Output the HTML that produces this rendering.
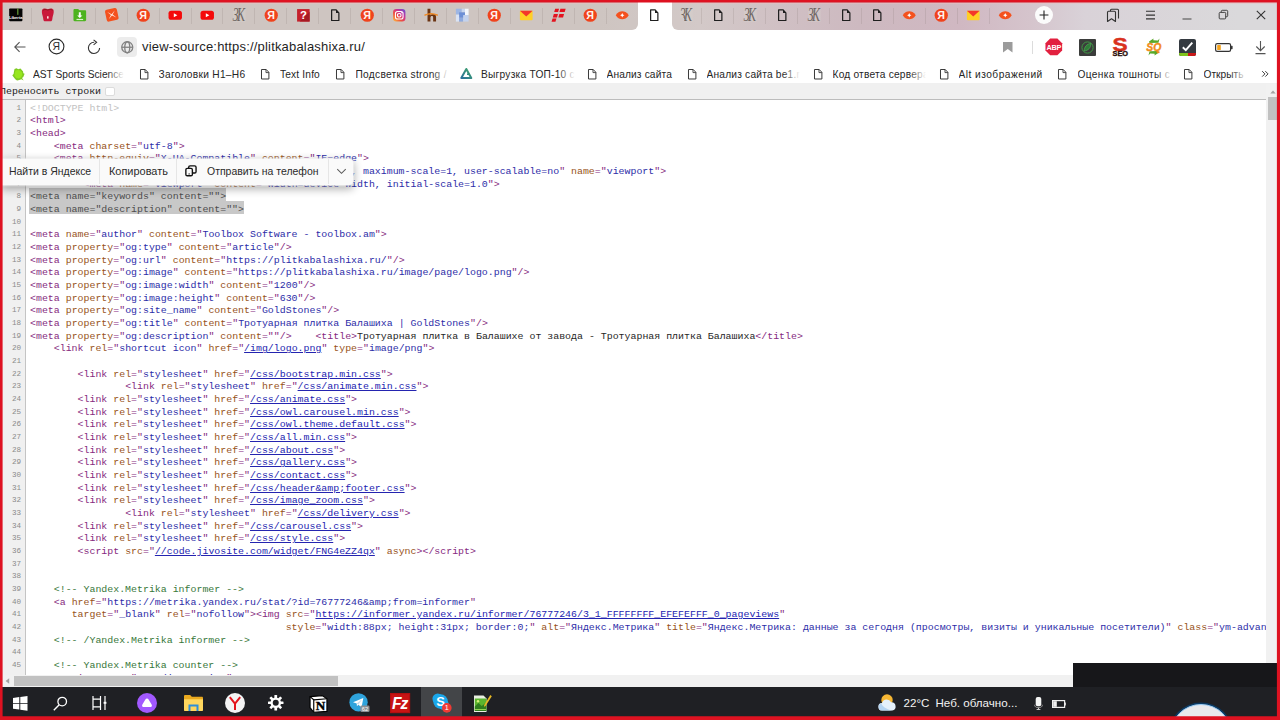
<!DOCTYPE html>
<html lang="ru"><head><meta charset="utf-8"><title>view-source</title>
<style>
*{box-sizing:border-box;margin:0;padding:0}
html,body{width:1280px;height:720px;overflow:hidden;background:#fff}
body{position:relative;font-family:"Liberation Sans",sans-serif}
.abs{position:absolute}
#tabbar{left:0;top:0;width:1280px;height:30px;background:linear-gradient(90deg,#cec5c1 0,#cec5c1 600px,#d3c9c8 700px,#d0c0c4 780px,#cdb9c0 860px,#d0b8c2 960px,#d5c4cc 1030px,#d9d2d8 1085px,#dad9db 1240px)}
#tabtop{left:0;top:2.7px;width:1280px;height:1.3px;background:rgba(238,190,192,.5)}
#acttab{left:638px;top:0;width:34px;height:31px;background:#fff}
#toolbar{left:0;top:30px;width:1280px;height:54px;background:#fff}
#wrapbar{left:0;top:83px;width:1280px;height:17px;background:#f0f0f0;border-bottom:1px solid #bcbcbc}
#wraptxt{left:0px;top:85.7px;font:9.92px/12px "Liberation Mono",monospace;color:#222;white-space:pre}
#wrapchk{left:105px;top:86.6px;width:9.5px;height:9.5px;background:#fff;border:1px solid #dcdcdc;border-radius:2px}
#code{left:0;top:99.5px;width:1266px;height:576px;overflow:hidden;background:#fff}
#gutter{left:0;top:0;width:25.5px;height:576px;background:#f0f0f0;border-right:1px solid #c4c4c4}
.num,.ln{position:absolute;font:9.92px/15.4px "Liberation Mono",monospace;white-space:pre;height:12.667px}
.num{left:0;width:21px;text-align:right;color:#8a8a8a;font-size:7.6px;margin-top:-99.5px}
.ln{left:30px;color:#262626;margin-top:-99.5px}
.t{color:#862a80}.an{color:#98531a}.av{color:#2d2da8}.c{color:#38783a}.d{color:#c2c2c2}
.lk{color:#2424b0;text-decoration:underline}
.seltx{color:#4e4e4e}
.selbg{position:absolute;left:29.3px;background:#c8c8c8;height:12.8px}
#vscroll{left:1266px;top:84px;width:11.5px;height:591px;background:#f1f1f1}
#vthumb{left:1267.5px;top:97px;width:9px;height:23px;background:#c1c1c1}
#hscroll{left:0;top:675px;width:1073px;height:12px;background:#f1f1f1}
#hthumb{left:14px;top:676px;width:323.5px;height:10px;background:#c1c1c1}
#blackbox{left:1073px;top:663px;width:207px;height:25px;background:#17171a}
#taskbar{left:0;top:687px;width:1280px;height:33px;background:#1f2024}
#frame{left:0;top:0;pointer-events:none}

svg{position:absolute;overflow:visible}
.bm{position:absolute;top:68.1px;font:10.2px/14px "Liberation Sans",sans-serif;letter-spacing:.3px;color:#262626;white-space:nowrap;overflow:hidden;height:14px}
.bm i{position:absolute;right:0;top:0;width:17px;height:14px;background:linear-gradient(90deg,rgba(255,255,255,0),#fff)}
#url{left:142px;top:39.4px;font:13px/16px "Liberation Sans",sans-serif;color:#1f1f1f;white-space:nowrap;letter-spacing:.18px}
.tsep{position:absolute;top:7.5px;width:1px;height:16px;background:rgba(120,105,100,.16)}
.pop{position:absolute;top:164.2px;font:11.4px/14px "Liberation Sans",sans-serif;color:#2a2a2a;white-space:nowrap;transform-origin:0 0;transform:scaleX(.918)}
.tk{position:absolute;top:695.6px;font:11.6px/14px "Liberation Sans",sans-serif;color:#f2f2f2;white-space:nowrap}

</style></head><body>
<div id="tabbar" class="abs"></div><div id="tabtop" class="abs"></div>
<div id="acttab" class="abs"></div>
<div id="toolbar" class="abs"></div>
<svg style="left:8.4px;top:7.4px" width="15.6" height="15.6" viewBox="0 0 16 16"><rect x="1.2" y="1.5" width="13.6" height="13" rx="0.8" fill="#050505"/><rect x="9.6" y="1.5" width="1" height="6.5" fill="#7bc242"/><text x="8" y="12.3" font-family="Liberation Sans,sans-serif" font-weight="bold" font-size="4.2" fill="#fff" text-anchor="middle">Liberta</text></svg>
<svg style="left:40.33px;top:7.4px" width="15.6" height="15.6" viewBox="0 0 16 16"><path d="M2 3.500C2.5 1.5 5 1 8 2.2 11 1 13.5 1.5 14 3.500c.5 2.5-.8 5-1.2 7.5-.2 1.8-.3 3.2-1.3 3.500H4.500c-1-.3-1.1-1.7-1.3-3.500C2.8 8.5 1.5 6 2 3.500z" fill="#c9183a"/><path d="M3.3 3.500c.8-1.2 2.5-1.2 4.7-.3 2.2-.9 3.9-.9 4.7.3" fill="none" stroke="#8c1a22" stroke-width="1"/><rect x="7.2" y="9.5" width="1.6" height="2.4" fill="#ffe3e3"/></svg>
<svg style="left:72.26px;top:7.4px" width="15.6" height="15.6" viewBox="0 0 16 16"><path d="M1.5 3.200c0-.7.5-1.2 1.2-1.200h3.600l1.3 1.400h5.700c.7 0 1.2.5 1.2 1.200v8.700c0 .7-.5 1.2-1.2 1.200H2.700c-.7 0-1.2-.5-1.2-1.200z" fill="#4db31f"/><path d="M7 5.500h2v3.200h1.700L8 11.4 5.3 8.700H7z" fill="#fff"/><rect x="4.6" y="12.2" width="6.8" height="1.2" fill="#d8f5c8"/></svg>
<svg style="left:104.19px;top:7.4px" width="15.6" height="15.6" viewBox="0 0 16 16"><g transform="rotate(-12 8 8)"><rect x="1.8" y="1.8" width="12.4" height="12.4" rx="2" fill="#f4511e"/><path d="M4 4.2 8 7.3 12 4.2 8.9 8 12 11.8 8 8.7 4 11.8 7.1 8z" fill="#ffe9df"/></g></svg>
<svg style="left:136.07px;top:7.95px" width="14.5" height="14.5" viewBox="0 0 16 16"><circle cx="8" cy="8" r="7.3" fill="#f0431c"/><text x="7.8" y="12.2" font-family="Liberation Sans,sans-serif" font-weight="bold" font-size="11.8" fill="#fff3ee" text-anchor="middle">Я</text></svg>
<svg style="left:168px;top:7.95px" width="14.5" height="14.5" viewBox="0 0 16 16"><rect x="0.6" y="3" width="14.8" height="10" rx="2.8" fill="#f40a0a"/><path d="M6.4 5.7 10.3 8 6.4 10.3z" fill="#fff"/></svg>
<svg style="left:199.93px;top:7.95px" width="14.5" height="14.5" viewBox="0 0 16 16"><rect x="0.6" y="3" width="14.8" height="10" rx="2.8" fill="#f40a0a"/><path d="M6.4 5.7 10.3 8 6.4 10.3z" fill="#fff"/></svg>
<svg style="left:231.86px;top:7.95px" width="14.5" height="14.5" viewBox="0 0 16 16"><rect x="1.200" y=".8" width="13.800" height="14.600" fill="#d8d2ce" opacity=".4"/><text transform="translate(6.700 14.600) scale(.66 1)" font-family="Liberation Serif,serif" font-style="italic" font-size="20" fill="#5f5653" text-anchor="middle" letter-spacing="-2.500" opacity=".88">ЗК</text></svg>
<svg style="left:263.79px;top:7.95px" width="14.5" height="14.5" viewBox="0 0 16 16"><circle cx="8" cy="8" r="7.3" fill="#f0431c"/><text x="7.8" y="12.2" font-family="Liberation Sans,sans-serif" font-weight="bold" font-size="11.8" fill="#fff3ee" text-anchor="middle">Я</text></svg>
<svg style="left:295.72px;top:7.95px" width="14.5" height="14.5" viewBox="0 0 16 16"><rect x="1.200" y="1.200" width="13.800" height="13.800" fill="#c5202b"/><path d="M15 4v11H4z" fill="#a61a24"/><text x="8.200" y="12.600" font-family="Liberation Sans,sans-serif" font-weight="bold" font-size="12.500" fill="#fff" text-anchor="middle">?</text></svg>
<svg style="left:327.65px;top:7.95px" width="14.5" height="14.5" viewBox="0 0 16 16"><path d="M4 2.100h5l3 3.200v8.500H4z" fill="none" stroke="#1e1e1e" stroke-width="1.350" stroke-linejoin="round"/><path d="M8.800 2v3.600h3.400z" fill="#1e1e1e"/></svg>
<svg style="left:359.58px;top:7.95px" width="14.5" height="14.5" viewBox="0 0 16 16"><circle cx="8" cy="8" r="7.3" fill="#f0431c"/><text x="7.8" y="12.2" font-family="Liberation Sans,sans-serif" font-weight="bold" font-size="11.8" fill="#fff3ee" text-anchor="middle">Я</text></svg>
<svg style="left:391.51px;top:7.95px" width="14.5" height="14.5" viewBox="0 0 16 16"><defs><linearGradient id="ig" x1="0" y1="1" x2="1" y2="0"><stop offset="0" stop-color="#fdc346"/><stop offset=".35" stop-color="#f0503a"/><stop offset=".65" stop-color="#c8329a"/><stop offset="1" stop-color="#5b55d8"/></linearGradient></defs><rect x="1.2" y="1.2" width="13.6" height="13.6" rx="3.6" fill="url(#ig)"/><rect x="3.8" y="3.8" width="8.4" height="8.4" rx="2.4" fill="none" stroke="#fff" stroke-width="1.2"/><circle cx="8" cy="8" r="2" fill="none" stroke="#fff" stroke-width="1.2"/><circle cx="10.8" cy="5.2" r=".7" fill="#fff"/></svg>
<svg style="left:423.44px;top:7.95px" width="14.5" height="14.5" viewBox="0 0 16 16"><path d="M5 .7h3.200V8.200c.8-1.200 1.800-1.700 3-1.700 2.100 0 3.200 1.200 3.200 3.500V15h-3.200v-4.600c0-1.100-.5-1.600-1.400-1.600-1 0-1.600.7-1.600 1.900V15H5z" fill="#6b3413"/><path d="M1.500 7.300Q9 3.600 16.500 7.300L16.200 8.900Q9 5.700 1.800 8.900z" fill="#f08a24"/></svg>
<svg style="left:455.37px;top:7.95px" width="14.5" height="14.5" viewBox="0 0 16 16"><rect x="1" y=".8" width="6.500" height="6.500" fill="#9db6e4"/><rect x="7.500" y=".8" width="3.500" height="4" fill="#c9d7f0"/><rect x="11" y=".8" width="4" height="7" fill="#f4f7fc"/><rect x="4.500" y="4.800" width="6.500" height="6" fill="#6c8fd6"/><rect x="1" y="7.300" width="3.500" height="7.700" fill="#d9e3f5"/><rect x="4.500" y="10.800" width="4.500" height="4.200" fill="#8eaadf"/><rect x="9" y="7.800" width="6" height="7.200" fill="#c3d2ee"/></svg>
<svg style="left:487.3px;top:7.95px" width="14.5" height="14.5" viewBox="0 0 16 16"><circle cx="8" cy="8" r="7.3" fill="#f0431c"/><text x="7.8" y="12.2" font-family="Liberation Sans,sans-serif" font-weight="bold" font-size="11.8" fill="#fff3ee" text-anchor="middle">Я</text></svg>
<svg style="left:519.23px;top:7.95px" width="14.5" height="14.5" viewBox="0 0 16 16"><rect x="1" y="3" width="14" height="10.5" rx="1" fill="#ffcf25"/><path d="M1 3h14L8 9.500z" fill="#f4372a"/></svg>
<svg style="left:551.16px;top:7.95px" width="14.5" height="14.5" viewBox="0 0 16 16"><path d="M4.600 .8h4.300l-1.100 3.500H3.500zM10.400 .8h5.800l-1.100 3.500H9.300zM3.100 6.700h4.600l-1.100 3.700H2zM9.200 6.700h5.200l-1.100 3.700H8.100zM1.700 11.500h4.300l-1.100 3.700H.6z" fill="#e3131f"/></svg>
<svg style="left:583.09px;top:7.95px" width="14.5" height="14.5" viewBox="0 0 16 16"><circle cx="8" cy="8" r="7.3" fill="#f0431c"/><text x="7.8" y="12.2" font-family="Liberation Sans,sans-serif" font-weight="bold" font-size="11.8" fill="#fff3ee" text-anchor="middle">Я</text></svg>
<svg style="left:615.02px;top:7.95px" width="14.5" height="14.5" viewBox="0 0 16 16"><path d="M0.8 8C3 4.6 5.6 3.6 8 3.6s5 1 7.2 4.4C13 11.4 10.4 12.4 8 12.400S3 11.4 .8 8z" fill="#f4511e"/><path d="M8 5.6 8.8 7.2 10.4 8 8.8 8.8 8 10.4 7.2 8.8 5.6 8 7.2 7.200z" fill="#fff"/></svg>
<svg style="left:646.95px;top:7.95px" width="14.5" height="14.5" viewBox="0 0 16 16"><path d="M4 2.100h5l3 3.200v8.500H4z" fill="none" stroke="#1e1e1e" stroke-width="1.350" stroke-linejoin="round"/><path d="M8.800 2v3.600h3.400z" fill="#1e1e1e"/></svg>
<svg style="left:678.88px;top:7.95px" width="14.5" height="14.5" viewBox="0 0 16 16"><rect x="1.200" y=".8" width="13.800" height="14.600" fill="#d8d2ce" opacity=".4"/><text transform="translate(6.700 14.600) scale(.66 1)" font-family="Liberation Serif,serif" font-style="italic" font-size="20" fill="#5f5653" text-anchor="middle" letter-spacing="-2.500" opacity=".88">ЗК</text></svg>
<svg style="left:710.81px;top:7.95px" width="14.5" height="14.5" viewBox="0 0 16 16"><path d="M4 2.100h5l3 3.200v8.500H4z" fill="none" stroke="#1e1e1e" stroke-width="1.350" stroke-linejoin="round"/><path d="M8.800 2v3.600h3.400z" fill="#1e1e1e"/></svg>
<svg style="left:742.74px;top:7.95px" width="14.5" height="14.5" viewBox="0 0 16 16"><rect x="1.200" y=".8" width="13.800" height="14.600" fill="#d8d2ce" opacity=".4"/><text transform="translate(6.700 14.600) scale(.66 1)" font-family="Liberation Serif,serif" font-style="italic" font-size="20" fill="#5f5653" text-anchor="middle" letter-spacing="-2.500" opacity=".88">ЗК</text></svg>
<svg style="left:774.67px;top:7.95px" width="14.5" height="14.5" viewBox="0 0 16 16"><path d="M4 2.100h5l3 3.200v8.500H4z" fill="none" stroke="#1e1e1e" stroke-width="1.350" stroke-linejoin="round"/><path d="M8.800 2v3.600h3.400z" fill="#1e1e1e"/></svg>
<svg style="left:806.6px;top:7.95px" width="14.5" height="14.5" viewBox="0 0 16 16"><rect x="1.200" y=".8" width="13.800" height="14.600" fill="#d8d2ce" opacity=".4"/><text transform="translate(6.700 14.600) scale(.66 1)" font-family="Liberation Serif,serif" font-style="italic" font-size="20" fill="#5f5653" text-anchor="middle" letter-spacing="-2.500" opacity=".88">ЗК</text></svg>
<svg style="left:838.53px;top:7.95px" width="14.5" height="14.5" viewBox="0 0 16 16"><path d="M4 2.100h5l3 3.200v8.500H4z" fill="none" stroke="#1e1e1e" stroke-width="1.350" stroke-linejoin="round"/><path d="M8.800 2v3.600h3.400z" fill="#1e1e1e"/></svg>
<svg style="left:870.46px;top:7.95px" width="14.5" height="14.5" viewBox="0 0 16 16"><path d="M4 2.100h5l3 3.200v8.500H4z" fill="none" stroke="#1e1e1e" stroke-width="1.350" stroke-linejoin="round"/><path d="M8.800 2v3.600h3.400z" fill="#1e1e1e"/></svg>
<svg style="left:902.39px;top:7.95px" width="14.5" height="14.5" viewBox="0 0 16 16"><path d="M0.8 8C3 4.6 5.6 3.6 8 3.6s5 1 7.2 4.4C13 11.4 10.4 12.4 8 12.400S3 11.4 .8 8z" fill="#f4511e"/><path d="M8 5.6 8.8 7.2 10.4 8 8.8 8.8 8 10.4 7.2 8.8 5.6 8 7.2 7.200z" fill="#fff"/></svg>
<svg style="left:934.32px;top:7.95px" width="14.5" height="14.5" viewBox="0 0 16 16"><circle cx="8" cy="8" r="7.3" fill="#f0431c"/><text x="7.8" y="12.2" font-family="Liberation Sans,sans-serif" font-weight="bold" font-size="11.8" fill="#fff3ee" text-anchor="middle">Я</text></svg>
<svg style="left:966.25px;top:7.95px" width="14.5" height="14.5" viewBox="0 0 16 16"><rect x="1" y="3" width="14" height="10.5" rx="1" fill="#ffcf25"/><path d="M1 3h14L8 9.500z" fill="#f4372a"/></svg>
<svg style="left:998.18px;top:7.95px" width="14.5" height="14.5" viewBox="0 0 16 16"><path d="M0.8 8C3 4.6 5.6 3.6 8 3.6s5 1 7.2 4.4C13 11.4 10.4 12.4 8 12.400S3 11.4 .8 8z" fill="#f4511e"/><path d="M8 5.6 8.8 7.2 10.4 8 8.8 8.8 8 10.4 7.2 8.8 5.6 8 7.2 7.200z" fill="#fff"/></svg>
<div class="tsep" style="left:30.8px"></div>
<div class="tsep" style="left:62.7px"></div>
<div class="tsep" style="left:94.7px"></div>
<div class="tsep" style="left:126.6px"></div>
<div class="tsep" style="left:158.5px"></div>
<div class="tsep" style="left:190.5px"></div>
<div class="tsep" style="left:222.4px"></div>
<div class="tsep" style="left:254.3px"></div>
<div class="tsep" style="left:286.2px"></div>
<div class="tsep" style="left:318.2px"></div>
<div class="tsep" style="left:350.1px"></div>
<div class="tsep" style="left:382.0px"></div>
<div class="tsep" style="left:414.0px"></div>
<div class="tsep" style="left:445.9px"></div>
<div class="tsep" style="left:477.8px"></div>
<div class="tsep" style="left:509.8px"></div>
<div class="tsep" style="left:541.7px"></div>
<div class="tsep" style="left:573.6px"></div>
<div class="tsep" style="left:605.5px"></div>
<div class="tsep" style="left:701.3px"></div>
<div class="tsep" style="left:733.3px"></div>
<div class="tsep" style="left:765.2px"></div>
<div class="tsep" style="left:797.1px"></div>
<div class="tsep" style="left:829.0px"></div>
<div class="tsep" style="left:861.0px"></div>
<div class="tsep" style="left:892.9px"></div>
<div class="tsep" style="left:924.8px"></div>
<div class="tsep" style="left:956.8px"></div>
<div class="tsep" style="left:988.7px"></div>
<div class="abs" style="left:632px;top:24px;width:6px;height:6px;background:#fff"></div><div class="abs" style="left:626px;top:18px;width:12px;height:12px;border-radius:0 0 6px 0;background:#cfc6c3"></div>
<div class="abs" style="left:672px;top:24px;width:6px;height:6px;background:#fff"></div><div class="abs" style="left:672px;top:18px;width:12px;height:12px;border-radius:0 0 0 6px;background:#d2c8c6"></div>
<div class="abs" style="left:1035px;top:5.500px;width:18px;height:18px;border-radius:9px;background:#fbfbfb"></div>
<svg style="left:1035.3px;top:5.5px" width="18" height="18" viewBox="0 0 18 18"><path d="M9 4.600v8.800M4.6 9h8.8" stroke="#222" stroke-width="1.1" fill="none"/></svg>
<svg style="left:1105px;top:7px" width="16" height="16" viewBox="0 0 16 16"><path d="M5.5 4.200V3.200c0-.6.4-1 1-1h6c.6 0 1 .4 1 1v8.3" fill="none" stroke="#333" stroke-width="1.1"/><path d="M2.5 5.200c0-.6.4-1 1-1h6c.6 0 1 .4 1 1v9.300l-4-2.8-4 2.800z" fill="none" stroke="#333" stroke-width="1.1" stroke-linejoin="round"/></svg>
<svg style="left:1142px;top:7px" width="16" height="16" viewBox="0 0 16 16"><path d="M4 4.300h9M4 8.100h9M4 11.900h9" stroke="#333" stroke-width="1.1"/></svg>
<svg style="left:1179px;top:7px" width="16" height="16" viewBox="0 0 16 16"><path d="M3.5 12h9" stroke="#555" stroke-width="1.1"/></svg>
<svg style="left:1215px;top:7px" width="16" height="16" viewBox="0 0 16 16"><path d="M6.300 5.400V4.200c0-.5.400-.9.900-.9h4.600c.5 0 .9.400.9.900v4.600c0 .5-.4.900-.9.900h-1.200" fill="none" stroke="#444" stroke-width="1"/><rect x="4.200" y="5.400" width="6.500" height="6.500" rx=".9" fill="none" stroke="#444" stroke-width="1"/></svg>
<svg style="left:1253px;top:7px" width="16" height="16" viewBox="0 0 16 16"><path d="M3.8 3.8 12.2 12.200M12.2 3.8 3.8 12.2" stroke="#333" stroke-width="1.1"/></svg>
<svg style="left:12px;top:39px" width="16" height="16" viewBox="0 0 16 16"><path d="M13.5 8H3M7.6 3.2 2.8 8l4.8 4.8" fill="none" stroke="#555" stroke-width="1.1"/></svg>
<svg style="left:48.1px;top:38px" width="17" height="17" viewBox="0 0 17 17"><circle cx="8.5" cy="8.5" r="7.4" fill="none" stroke="#2b2b2b" stroke-width="1.1"/><text x="8.200" y="12.200" font-family="Liberation Sans,sans-serif" font-size="10.400" fill="#2b2b2b" text-anchor="middle">Я</text></svg>
<svg style="left:86px;top:38.5px" width="16" height="17" viewBox="0 0 16 17"><path d="M8.2 3.300A5.6 5.6 0 1 0 13.6 9" fill="none" stroke="#333" stroke-width="1.1"/><path d="M7.6 .8 10.6 3.3 7.6 5.8" fill="none" stroke="#333" stroke-width="1.1"/></svg>
<div class="abs" style="left:117px;top:36.500px;width:19.500px;height:20.500px;border-radius:4px;background:#ececec"></div>
<svg style="left:120.5px;top:40.5px" width="12.5" height="12.5" viewBox="0 0 12.5 12.5"><g fill="none" stroke="#828282" stroke-width="1.300"><circle cx="6.250" cy="6.250" r="5.500"/><path d="M.8 6.250h11"/><ellipse cx="6.250" cy="6.250" rx="2.500" ry="5.500"/></g></svg>
<div id="url" class="abs">view-source:https://plitkabalashixa.ru/</div>
<svg style="left:1002.5px;top:42px" width="9.5" height="10.5" viewBox="0 0 9.5 10.5"><path d="M0 0h9.500v10.500L4.750 7 0 10.500z" fill="#9b9b9b"/></svg>
<div class="abs" style="left:1032px;top:40.500px;width:1px;height:13px;background:#dcdcdc"></div>
<svg style="left:1044.9px;top:38.2px" width="17.6" height="17.6" viewBox="0 0 19 19"><path d="M5.6 .5h7.800l5.1 5.100v7.800l-5.1 5.100H5.600L.5 13.400V5.600z" fill="#e2203f"/><text x="9.5" y="12.5" font-family="Liberation Sans,sans-serif" font-weight="bold" font-size="7.900" fill="#fff" text-anchor="middle" letter-spacing="-.35">ABP</text></svg>
<svg style="left:1078.5px;top:38.5px" width="17" height="17" viewBox="0 0 17 17"><rect width="17" height="17" rx="1" fill="#3b3d3b"/><circle cx="8.5" cy="8.5" r="5.6" fill="none" stroke="#3f9a45" stroke-width="1"/><path d="M5.2 12c0-4 2.5-7 6.6-7.600C12 8.5 9.5 11.5 5.2 12z" fill="#2f7d38" stroke="#56b45c" stroke-width=".6"/></svg>
<svg style="left:1110px;top:37px" width="20" height="20" viewBox="0 0 20 20"><text transform="translate(10 14.200) scale(1.220 1)" x="0" y="0" font-family="Liberation Sans,sans-serif" font-weight="bold" font-size="18.500" fill="#d9321e" stroke="#d9321e" stroke-width=".5" text-anchor="middle">S</text><text x="10.300" y="18.600" font-family="Liberation Sans,sans-serif" font-weight="bold" font-size="7.400" fill="#2a0c08" stroke="#2a0c08" stroke-width=".35" text-anchor="middle">SEO</text></svg>
<svg style="left:1143px;top:37px" width="22" height="20" viewBox="0 0 22 20"><path d="M6 4.500 10.500 1.500l-.2 1.800 4.500.2L16.500 1.500 15.500 5.700 6.500 6zM16 15.500 11.500 18.500l.2-1.800-4.500-.2L5.500 18.500 6.500 14.300l9-.3z" fill="#58a829"/><text x="10.800" y="13.600" font-family="Liberation Sans,sans-serif" font-weight="bold" font-style="italic" font-size="10.400" fill="#f28c1a" stroke="#f28c1a" stroke-width=".4" text-anchor="middle">SQ</text></svg>
<svg style="left:1178.5px;top:38.5px" width="17" height="17" viewBox="0 0 17 17"><rect width="17" height="17" rx="2" fill="#343a40"/><path d="M0 14h9v3H2a2 2 0 0 1-2-2z" fill="#7fc31c"/><path d="M9 14h8v1a2 2 0 0 1-2 2H9z" fill="#c91818"/><path d="M3.8 8.3 6.8 11.2 13.3 3.6" fill="none" stroke="#fff" stroke-width="1.9"/></svg>
<svg style="left:1215px;top:42.5px" width="18" height="9" viewBox="0 0 18 9"><rect x=".6" y=".6" width="15" height="7.8" rx="1.6" fill="#fff" stroke="#333" stroke-width="1.2"/><rect x="16" y="2.8" width="1.6" height="3.4" rx=".6" fill="#333"/><rect x="2.2" y="2" width="3.6" height="5" rx=".6" fill="#f5a31a"/></svg>
<svg style="left:1253px;top:39.5px" width="15" height="15" viewBox="0 0 15 15"><path d="M7.5 1v9.600M3.3 6.500l4.2 4.2 4.2-4.200M2.5 13.600h10" fill="none" stroke="#555" stroke-width="1.1"/></svg>
<svg style="left:12px;top:68px" width="13" height="13" viewBox="0 0 13 13"><path d="M2.500 1 4.500 .3 6.200 1.200 8.500 .4l1.300 1.600 1.300 1.500.2 1.700 1.300.6-.7 1.800-.6 1.500-1.300 1 1.700 2.400-2.400-1.200-2 .7-2.300.4-1.700-1.200-1.200-1.500L.3 7.300l1.300-1.200.3-2z" fill="#7fcb22"/><path d="M3.500 2.500 6 2l2.200.5 1.800 2 .3 2.500-1.300 2.500-2.500 1-2.500-.8-1.500-2.200.3-2.500z" fill="#98e61f"/></svg>
<div class="bm" style="left:33px;width:91px;letter-spacing:0px">AST Sports Science<i></i></div>
<svg style="left:139.9px;top:68.9px" width="8.4" height="10.5" viewBox="0 0 8.4 10.5"><path d="M.5 .5h4.700l2.700 2.800v6.700H.5z" fill="#fff" stroke="#3a3a3a" stroke-width="1" stroke-linejoin="round"/><path d="M5 .6v3h2.900" fill="none" stroke="#3a3a3a" stroke-width=".9"/></svg>
<div class="bm" style="left:158.5px;width:91.5px;letter-spacing:0.29px">Заголовки H1–H6</div>
<svg style="left:260.9px;top:68.9px" width="8.4" height="10.5" viewBox="0 0 8.4 10.5"><path d="M.5 .5h4.700l2.700 2.800v6.700H.5z" fill="#fff" stroke="#3a3a3a" stroke-width="1" stroke-linejoin="round"/><path d="M5 .6v3h2.900" fill="none" stroke="#3a3a3a" stroke-width=".9"/></svg>
<div class="bm" style="left:280px;width:45px;letter-spacing:0.16px">Text Info</div>
<svg style="left:335.9px;top:68.9px" width="8.4" height="10.5" viewBox="0 0 8.4 10.5"><path d="M.5 .5h4.700l2.700 2.800v6.700H.5z" fill="#fff" stroke="#3a3a3a" stroke-width="1" stroke-linejoin="round"/><path d="M5 .6v3h2.900" fill="none" stroke="#3a3a3a" stroke-width=".9"/></svg>
<div class="bm" style="left:355.5px;width:93.5px;letter-spacing:0.28px">Подсветка strong /<i></i></div>
<svg style="left:459.5px;top:66.8px" width="12.6" height="12.4" viewBox="0 0 12.6 12.4"><defs><linearGradient id="trg" x1="0" y1="1" x2="1" y2="0"><stop offset="0" stop-color="#2a6f9c"/><stop offset="1" stop-color="#3fa56a"/></linearGradient></defs><path d="M6.300 2 11.300 11.100H1.300z" fill="none" stroke="url(#trg)" stroke-width="2" stroke-linejoin="round"/><path d="M7 7.200h2.200" stroke="#2f8a7c" stroke-width="1.600"/></svg>
<div class="bm" style="left:481px;width:94px;letter-spacing:0.23px">Выгрузка ТОП-10 с<i></i></div>
<svg style="left:587.9px;top:68.9px" width="8.4" height="10.5" viewBox="0 0 8.4 10.5"><path d="M.5 .5h4.700l2.700 2.800v6.700H.5z" fill="#fff" stroke="#3a3a3a" stroke-width="1" stroke-linejoin="round"/><path d="M5 .6v3h2.900" fill="none" stroke="#3a3a3a" stroke-width=".9"/></svg>
<div class="bm" style="left:606.5px;width:71.5px;letter-spacing:0.13px">Анализ сайта</div>
<svg style="left:687.9px;top:68.9px" width="8.4" height="10.5" viewBox="0 0 8.4 10.5"><path d="M.5 .5h4.700l2.700 2.800v6.700H.5z" fill="#fff" stroke="#3a3a3a" stroke-width="1" stroke-linejoin="round"/><path d="M5 .6v3h2.900" fill="none" stroke="#3a3a3a" stroke-width=".9"/></svg>
<div class="bm" style="left:706.5px;width:93.5px;letter-spacing:0.2px">Анализ сайта be1.ru<i></i></div>
<svg style="left:813.9px;top:68.9px" width="8.4" height="10.5" viewBox="0 0 8.4 10.5"><path d="M.5 .5h4.700l2.700 2.800v6.700H.5z" fill="#fff" stroke="#3a3a3a" stroke-width="1" stroke-linejoin="round"/><path d="M5 .6v3h2.900" fill="none" stroke="#3a3a3a" stroke-width=".9"/></svg>
<div class="bm" style="left:832.5px;width:93.5px;letter-spacing:0.2px">Код ответа сервера<i></i></div>
<svg style="left:939.9px;top:68.9px" width="8.4" height="10.5" viewBox="0 0 8.4 10.5"><path d="M.5 .5h4.700l2.700 2.800v6.700H.5z" fill="#fff" stroke="#3a3a3a" stroke-width="1" stroke-linejoin="round"/><path d="M5 .6v3h2.900" fill="none" stroke="#3a3a3a" stroke-width=".9"/></svg>
<div class="bm" style="left:958.5px;width:89.5px;letter-spacing:0.46px">Alt изображений</div>
<svg style="left:1057.9px;top:68.9px" width="8.4" height="10.5" viewBox="0 0 8.4 10.5"><path d="M.5 .5h4.700l2.700 2.800v6.700H.5z" fill="#fff" stroke="#3a3a3a" stroke-width="1" stroke-linejoin="round"/><path d="M5 .6v3h2.900" fill="none" stroke="#3a3a3a" stroke-width=".9"/></svg>
<div class="bm" style="left:1077.5px;width:94.5px;letter-spacing:0.33px">Оценка тошноты с<i></i></div>
<svg style="left:1183.9px;top:68.9px" width="8.4" height="10.5" viewBox="0 0 8.4 10.5"><path d="M.5 .5h4.700l2.700 2.800v6.700H.5z" fill="#fff" stroke="#3a3a3a" stroke-width="1" stroke-linejoin="round"/><path d="M5 .6v3h2.900" fill="none" stroke="#3a3a3a" stroke-width=".9"/></svg>
<div class="bm" style="left:1203.5px;width:43.5px;letter-spacing:0px">Открыть<i></i></div>
<svg style="left:1260.5px;top:69.6px" width="7.8" height="7.8" viewBox="0 0 10 10"><path d="M1.500 1.500 5 5 1.500 8.500M5.500 1.500 9 5 5.500 8.500" fill="none" stroke="#3a3a3a" stroke-width="1.250"/></svg>
<div id="wrapbar" class="abs"></div>
<div id="wraptxt" class="abs">Переносить строки</div>
<div id="wrapchk" class="abs"></div>
<div id="code" class="abs"><div id="gutter" class="abs"></div>
<div class="selbg" style="top:88.7px;width:197px"></div><div class="selbg" style="top:101.4px;width:214.8px"></div>
<div class="num" style="top:100.67px">1</div><div class="ln" style="top:100.67px"><span class="d">&lt;!DOCTYPE html&gt;</span></div>
<div class="num" style="top:113.33px">2</div><div class="ln" style="top:113.33px"><span class="t">&lt;html</span><span class="t">&gt;</span></div>
<div class="num" style="top:126.00px">3</div><div class="ln" style="top:126.00px"><span class="t">&lt;head</span><span class="t">&gt;</span></div>
<div class="num" style="top:138.67px">4</div><div class="ln" style="top:138.67px">    <span class="t">&lt;meta</span> <span class="an">charset</span><span class="t">="</span><span class="av">utf-8</span><span class="t">"</span><span class="t">&gt;</span></div>
<div class="num" style="top:151.33px">5</div><div class="ln" style="top:151.33px">    <span class="t">&lt;meta</span> <span class="an">http-equiv</span><span class="t">="</span><span class="av">X-UA-Compatible</span><span class="t">"</span> <span class="an">content</span><span class="t">="</span><span class="av">IE=edge</span><span class="t">"</span><span class="t">&gt;</span></div>
<div class="num" style="top:164.00px">6</div><div class="ln" style="top:164.00px">    <span class="t">&lt;meta</span> <span class="an">content</span><span class="t">="</span><span class="av">width=device-width, initial-scale=1, maximum-scale=1, user-scalable=no</span><span class="t">"</span> <span class="an">name</span><span class="t">="</span><span class="av">viewport</span><span class="t">"</span><span class="t">&gt;</span></div>
<div class="num" style="top:176.67px">7</div><div class="ln" style="top:176.67px">         <span class="t">&lt;meta</span> <span class="an">name</span><span class="t">="</span><span class="av">viewport</span><span class="t">"</span> <span class="an">content</span><span class="t">="</span><span class="av">width=device-width, initial-scale=1.0</span><span class="t">"</span><span class="t">&gt;</span></div>
<div class="num" style="top:189.34px">8</div><div class="ln sel" style="top:189.34px"><span class="seltx">&lt;meta name="keywords" content=""&gt;</span></div>
<div class="num" style="top:202.00px">9</div><div class="ln sel" style="top:202.00px"><span class="seltx">&lt;meta name="description" content=""&gt;</span></div>
<div class="num" style="top:214.67px">10</div><div class="ln" style="top:214.67px"></div>
<div class="num" style="top:227.34px">11</div><div class="ln" style="top:227.34px"><span class="t">&lt;meta</span> <span class="an">name</span><span class="t">="</span><span class="av">author</span><span class="t">"</span> <span class="an">content</span><span class="t">="</span><span class="av">Toolbox Software - toolbox.am</span><span class="t">"</span><span class="t">&gt;</span></div>
<div class="num" style="top:240.00px">12</div><div class="ln" style="top:240.00px"><span class="t">&lt;meta</span> <span class="an">property</span><span class="t">="</span><span class="av">og:type</span><span class="t">"</span> <span class="an">content</span><span class="t">="</span><span class="av">article</span><span class="t">"</span><span class="t">/&gt;</span></div>
<div class="num" style="top:252.67px">13</div><div class="ln" style="top:252.67px"><span class="t">&lt;meta</span> <span class="an">property</span><span class="t">="</span><span class="av">og:url</span><span class="t">"</span> <span class="an">content</span><span class="t">="</span><span class="av">https://plitkabalashixa.ru/</span><span class="t">"</span><span class="t">/&gt;</span></div>
<div class="num" style="top:265.34px">14</div><div class="ln" style="top:265.34px"><span class="t">&lt;meta</span> <span class="an">property</span><span class="t">="</span><span class="av">og:image</span><span class="t">"</span> <span class="an">content</span><span class="t">="</span><span class="av">https://plitkabalashixa.ru/image/page/logo.png</span><span class="t">"</span><span class="t">/&gt;</span></div>
<div class="num" style="top:278.00px">15</div><div class="ln" style="top:278.00px"><span class="t">&lt;meta</span> <span class="an">property</span><span class="t">="</span><span class="av">og:image:width</span><span class="t">"</span> <span class="an">content</span><span class="t">="</span><span class="av">1200</span><span class="t">"</span><span class="t">/&gt;</span></div>
<div class="num" style="top:290.67px">16</div><div class="ln" style="top:290.67px"><span class="t">&lt;meta</span> <span class="an">property</span><span class="t">="</span><span class="av">og:image:height</span><span class="t">"</span> <span class="an">content</span><span class="t">="</span><span class="av">630</span><span class="t">"</span><span class="t">/&gt;</span></div>
<div class="num" style="top:303.34px">17</div><div class="ln" style="top:303.34px"><span class="t">&lt;meta</span> <span class="an">property</span><span class="t">="</span><span class="av">og:site_name</span><span class="t">"</span> <span class="an">content</span><span class="t">="</span><span class="av">GoldStones</span><span class="t">"</span><span class="t">/&gt;</span></div>
<div class="num" style="top:316.01px">18</div><div class="ln" style="top:316.01px"><span class="t">&lt;meta</span> <span class="an">property</span><span class="t">="</span><span class="av">og:title</span><span class="t">"</span> <span class="an">content</span><span class="t">="</span><span class="av">Тротуарная плитка Балашиха | GoldStones</span><span class="t">"</span><span class="t">/&gt;</span></div>
<div class="num" style="top:328.67px">19</div><div class="ln" style="top:328.67px"><span class="t">&lt;meta</span> <span class="an">property</span><span class="t">="</span><span class="av">og:description</span><span class="t">"</span> <span class="an">content</span><span class="t">="</span><span class="av"></span><span class="t">"</span><span class="t">/&gt;</span>    <span class="t">&lt;title</span><span class="t">&gt;</span>Тротуарная плитка в Балашихе от завода - Тротуарная плитка Балашиха<span class="t">&lt;/title</span><span class="t">&gt;</span></div>
<div class="num" style="top:341.34px">20</div><div class="ln" style="top:341.34px">    <span class="t">&lt;link</span> <span class="an">rel</span><span class="t">="</span><span class="av">shortcut icon</span><span class="t">"</span> <span class="an">href</span><span class="t">="</span><span class="av"><span class="lk">/img/logo.png</span></span><span class="t">"</span> <span class="an">type</span><span class="t">="</span><span class="av">image/png</span><span class="t">"</span><span class="t">&gt;</span></div>
<div class="num" style="top:354.01px">21</div><div class="ln" style="top:354.01px"></div>
<div class="num" style="top:366.67px">22</div><div class="ln" style="top:366.67px">        <span class="t">&lt;link</span> <span class="an">rel</span><span class="t">="</span><span class="av">stylesheet</span><span class="t">"</span> <span class="an">href</span><span class="t">="</span><span class="av"><span class="lk">/css/bootstrap.min.css</span></span><span class="t">"</span><span class="t">&gt;</span></div>
<div class="num" style="top:379.34px">23</div><div class="ln" style="top:379.34px">                <span class="t">&lt;link</span> <span class="an">rel</span><span class="t">="</span><span class="av">stylesheet</span><span class="t">"</span> <span class="an">href</span><span class="t">="</span><span class="av"><span class="lk">/css/animate.min.css</span></span><span class="t">"</span><span class="t">&gt;</span></div>
<div class="num" style="top:392.01px">24</div><div class="ln" style="top:392.01px">        <span class="t">&lt;link</span> <span class="an">rel</span><span class="t">="</span><span class="av">stylesheet</span><span class="t">"</span> <span class="an">href</span><span class="t">="</span><span class="av"><span class="lk">/css/animate.css</span></span><span class="t">"</span><span class="t">&gt;</span></div>
<div class="num" style="top:404.67px">25</div><div class="ln" style="top:404.67px">        <span class="t">&lt;link</span> <span class="an">rel</span><span class="t">="</span><span class="av">stylesheet</span><span class="t">"</span> <span class="an">href</span><span class="t">="</span><span class="av"><span class="lk">/css/owl.carousel.min.css</span></span><span class="t">"</span><span class="t">&gt;</span></div>
<div class="num" style="top:417.34px">26</div><div class="ln" style="top:417.34px">        <span class="t">&lt;link</span> <span class="an">rel</span><span class="t">="</span><span class="av">stylesheet</span><span class="t">"</span> <span class="an">href</span><span class="t">="</span><span class="av"><span class="lk">/css/owl.theme.default.css</span></span><span class="t">"</span><span class="t">&gt;</span></div>
<div class="num" style="top:430.01px">27</div><div class="ln" style="top:430.01px">        <span class="t">&lt;link</span> <span class="an">rel</span><span class="t">="</span><span class="av">stylesheet</span><span class="t">"</span> <span class="an">href</span><span class="t">="</span><span class="av"><span class="lk">/css/all.min.css</span></span><span class="t">"</span><span class="t">&gt;</span></div>
<div class="num" style="top:442.68px">28</div><div class="ln" style="top:442.68px">        <span class="t">&lt;link</span> <span class="an">rel</span><span class="t">="</span><span class="av">stylesheet</span><span class="t">"</span> <span class="an">href</span><span class="t">="</span><span class="av"><span class="lk">/css/about.css</span></span><span class="t">"</span><span class="t">&gt;</span></div>
<div class="num" style="top:455.34px">29</div><div class="ln" style="top:455.34px">        <span class="t">&lt;link</span> <span class="an">rel</span><span class="t">="</span><span class="av">stylesheet</span><span class="t">"</span> <span class="an">href</span><span class="t">="</span><span class="av"><span class="lk">/css/gallery.css</span></span><span class="t">"</span><span class="t">&gt;</span></div>
<div class="num" style="top:468.01px">30</div><div class="ln" style="top:468.01px">        <span class="t">&lt;link</span> <span class="an">rel</span><span class="t">="</span><span class="av">stylesheet</span><span class="t">"</span> <span class="an">href</span><span class="t">="</span><span class="av"><span class="lk">/css/contact.css</span></span><span class="t">"</span><span class="t">&gt;</span></div>
<div class="num" style="top:480.68px">31</div><div class="ln" style="top:480.68px">        <span class="t">&lt;link</span> <span class="an">rel</span><span class="t">="</span><span class="av">stylesheet</span><span class="t">"</span> <span class="an">href</span><span class="t">="</span><span class="av"><span class="lk">/css/header&amp;amp;footer.css</span></span><span class="t">"</span><span class="t">&gt;</span></div>
<div class="num" style="top:493.34px">32</div><div class="ln" style="top:493.34px">        <span class="t">&lt;link</span> <span class="an">rel</span><span class="t">="</span><span class="av">stylesheet</span><span class="t">"</span> <span class="an">href</span><span class="t">="</span><span class="av"><span class="lk">/css/image_zoom.css</span></span><span class="t">"</span><span class="t">&gt;</span></div>
<div class="num" style="top:506.01px">33</div><div class="ln" style="top:506.01px">                <span class="t">&lt;link</span> <span class="an">rel</span><span class="t">="</span><span class="av">stylesheet</span><span class="t">"</span> <span class="an">href</span><span class="t">="</span><span class="av"><span class="lk">/css/delivery.css</span></span><span class="t">"</span><span class="t">&gt;</span></div>
<div class="num" style="top:518.68px">34</div><div class="ln" style="top:518.68px">        <span class="t">&lt;link</span> <span class="an">rel</span><span class="t">="</span><span class="av">stylesheet</span><span class="t">"</span> <span class="an">href</span><span class="t">="</span><span class="av"><span class="lk">/css/carousel.css</span></span><span class="t">"</span><span class="t">&gt;</span></div>
<div class="num" style="top:531.34px">35</div><div class="ln" style="top:531.34px">        <span class="t">&lt;link</span> <span class="an">rel</span><span class="t">="</span><span class="av">stylesheet</span><span class="t">"</span> <span class="an">href</span><span class="t">="</span><span class="av"><span class="lk">/css/style.css</span></span><span class="t">"</span><span class="t">&gt;</span></div>
<div class="num" style="top:544.01px">36</div><div class="ln" style="top:544.01px">        <span class="t">&lt;script</span> <span class="an">src</span><span class="t">="</span><span class="av"><span class="lk">//code.jivosite.com/widget/FNG4eZZ4qx</span></span><span class="t">"</span> <span class="an">async</span><span class="t">&gt;</span><span class="t">&lt;/script</span><span class="t">&gt;</span></div>
<div class="num" style="top:556.68px">37</div><div class="ln" style="top:556.68px"></div>
<div class="num" style="top:569.35px">38</div><div class="ln" style="top:569.35px"></div>
<div class="num" style="top:582.01px">39</div><div class="ln" style="top:582.01px">    <span class="c">&lt;!-- Yandex.Metrika informer --&gt;</span></div>
<div class="num" style="top:594.68px">40</div><div class="ln" style="top:594.68px">    <span class="t">&lt;a</span> <span class="an">href</span><span class="t">="</span><span class="av">https://metrika.yandex.ru/stat/?id=76777246&amp;amp;from=informer</span><span class="t">"</span><span class="t"></span></div>
<div class="num" style="top:607.35px">41</div><div class="ln" style="top:607.35px">       <span class="an">target</span><span class="t">="</span><span class="av">_blank</span><span class="t">"</span> <span class="an">rel</span><span class="t">="</span><span class="av">nofollow</span><span class="t">"</span><span class="t">&gt;</span><span class="t">&lt;img</span> <span class="an">src</span><span class="t">="</span><span class="av"><span class="lk">https://informer.yandex.ru/informer/76777246/3_1_FFFFFFFF_EFEFEFFF_0_pageviews</span></span><span class="t">"</span><span class="t"></span></div>
<div class="num" style="top:620.01px">42</div><div class="ln" style="top:620.01px">                                           <span class="an">style</span><span class="t">="</span><span class="av">width:88px; height:31px; border:0;</span><span class="t">"</span> <span class="an">alt</span><span class="t">="</span><span class="av">Яндекс.Метрика</span><span class="t">"</span> <span class="an">title</span><span class="t">="</span><span class="av">Яндекс.Метрика: данные за сегодня (просмотры, визиты и уникальные посетители)</span><span class="t">"</span> <span class="an">class</span><span class="t">="</span><span class="av">ym-advanced-informer</span><span class="t">"</span><span class="t"></span></div>
<div class="num" style="top:632.68px">43</div><div class="ln" style="top:632.68px">    <span class="c">&lt;!-- /Yandex.Metrika informer --&gt;</span></div>
<div class="num" style="top:645.35px">44</div><div class="ln" style="top:645.35px"></div>
<div class="num" style="top:658.01px">45</div><div class="ln" style="top:658.01px">    <span class="c">&lt;!-- Yandex.Metrika counter --&gt;</span></div>
<div class="num" style="top:670.68px">46</div><div class="ln" style="top:670.68px">    <span class="t">&lt;script</span> <span class="an">type</span><span class="t">="</span><span class="av">text/javascript</span><span class="t">"</span><span class="t"> &gt;</span></div>
</div>
<div id="vscroll" class="abs"></div><div id="vthumb" class="abs"></div>
<div id="hscroll" class="abs"></div><div id="hthumb" class="abs"></div>
<svg style="left:4.5px;top:678px" width="5" height="6" viewBox="0 0 5 6"><path d="M4.2 .3v5.400L.6 3z" fill="#a3a3a3"/></svg>
<svg style="left:1269.500px;top:89.500px" width="6" height="4" viewBox="0 0 6 4"><path d="M.3 3.600h5.400L3 .5z" fill="#a3a3a3"/></svg>
<div class="abs" style="left:2px;top:158.500px;width:350.500px;height:26px;background:#fafafa;border-radius:0 4px 4px 0;box-shadow:0 0 2px 1px rgba(250,250,250,.85),0 3px 8px 1px rgba(0,0,0,.32),0 0 3px rgba(0,0,0,.12)"></div>
<div class="abs" style="left:98.500px;top:159px;width:1px;height:25px;background:#e6e6e6"></div>
<div class="abs" style="left:175.500px;top:159px;width:1px;height:25px;background:#e6e6e6"></div>
<div class="abs" style="left:328px;top:159px;width:1px;height:25px;background:#e6e6e6"></div>
<div class="pop" style="left:9px">Найти в Яндексе</div>
<div class="pop" style="left:109px;transform:scaleX(.96)">Копировать</div>
<div class="pop" style="left:207px">Отправить на телефон</div>
<svg style="left:185px;top:164.6px" width="12" height="12" viewBox="0 0 14 14"><rect x="4.300" y="1" width="8.600" height="8.400" rx="1.600" fill="none" stroke="#111" stroke-width="1.600"/><rect x="1" y="4" width="7.600" height="8.600" rx="1.600" fill="#fafafa" stroke="#111" stroke-width="1.600"/><circle cx="4.800" cy="10.400" r=".8" fill="#111"/></svg><svg style="left:336px;top:167px" width="11" height="8.5" viewBox="0 0 13 10"><path d="M1.500 2.500 6.500 7.500 11.500 2.500" fill="none" stroke="#5a5a5a" stroke-width="1.200"/></svg>
<div id="blackbox" class="abs"></div>
<div id="taskbar" class="abs"></div>
<svg style="left:13px;top:696px" width="14.5" height="14.5" viewBox="0 0 14.5 14.5"><path d="M0 2 6.3 1.100v5.800H0zM7.3 1 14.5 0v6.900H7.300zM0 7.800h6.300v5.800L0 12.700zM7.3 7.800h7.200v6.900L7.3 13.700z" fill="#fff"/></svg>
<svg style="left:53px;top:696px" width="15" height="15" viewBox="0 0 15 15"><circle cx="9.2" cy="5.6" r="4.3" fill="none" stroke="#fff" stroke-width="1.3"/><path d="M6.2 8.8.8 14.2" stroke="#fff" stroke-width="1.4"/></svg>
<svg style="left:92px;top:696px" width="16" height="14" viewBox="0 0 16 14"><g fill="none" stroke="#fff" stroke-width="1.2"><path d="M1 0v14M8.5 0v14M1 3.200h7.500M1 10.800h7.500M13 0v14"/><path d="M11.6 6.800h2.8" stroke-width="2"/></g></svg>
<svg style="left:136.6px;top:692.9px" width="20" height="20" viewBox="0 0 20 20"><circle cx="10" cy="10" r="10" fill="#a259ff"/><path d="M10 5.400c.7 0 1.2.4 1.6 1.100l3 4.900c.8 1.4.1 2.6-1.5 2.600H6.900c-1.6 0-2.3-1.2-1.5-2.600l3-4.900c.4-.7.9-1.1 1.6-1.100z" fill="#fff"/></svg>
<svg style="left:184px;top:694.5px" width="19" height="16" viewBox="0 0 19 16"><path d="M0 1.200C0 .5.5 0 1.2 0h5l1.6 1.800h10c.7 0 1.2.5 1.2 1.200V14H0z" fill="#e9a91f"/><path d="M0 4.200h19V15c0 .6-.4 1-1 1H1c-.6 0-1-.4-1-1z" fill="#ffd75e"/><rect x="4.5" y="9.5" width="10" height="6.5" fill="#2f8fd8"/><rect x="6.5" y="11.5" width="6" height="4.5" fill="#ffd75e"/></svg>
<svg style="left:224.8px;top:692.9px" width="20" height="20" viewBox="0 0 20 20"><circle cx="10" cy="10" r="10" fill="#f4f4f4"/><path d="M4.8 4.2 10 10.6 15.2 4.200M10 10.400V17" fill="none" stroke="#e4141c" stroke-width="2"/></svg>
<svg style="left:267.8px;top:695.3px" width="15.5" height="15.5" viewBox="0 0 17 17"><g fill="#fff"><circle cx="8.500" cy="8.500" r="5.800"/><g id="gt"><rect x="7" y="0" width="3" height="17" rx=".6"/></g><use href="#gt" transform="rotate(45 8.500 8.500)"/><use href="#gt" transform="rotate(90 8.500 8.500)"/><use href="#gt" transform="rotate(135 8.500 8.500)"/></g><circle cx="8.500" cy="8.500" r="3.300" fill="#1f2024"/></svg>
<svg style="left:308.5px;top:694px" width="19" height="19" viewBox="0 0 18 18"><path d="M1 2.500 12.500 1.500 17 4.500V16.500L4.500 17.300 1 13z" fill="#fff" stroke="#000" stroke-width="1.100"/><path d="M1 2.500 4.500 5.500V17" fill="none" stroke="#000" stroke-width="1.100"/><path d="M4.500 5.500 17 4.500" stroke="#000" stroke-width="1.100"/><text x="10.800" y="15.400" font-family="Liberation Serif,serif" font-weight="bold" font-size="12.500" fill="#000" stroke="#000" stroke-width=".4" text-anchor="middle">N</text></svg>
<svg style="left:349.2px;top:692.6px" width="21" height="21" viewBox="0 0 22 22"><circle cx="10" cy="9.8" r="9.6" fill="#2fa3dc"/><path d="M4.2 9.6 15 5.2 13.2 14.8 9.8 12.2 8.3 13.8 8.1 11z" fill="#fff"/><path d="M8.1 11 13.5 6.8 9.8 12.2" fill="#c8daea"/><rect x="12" y="13" width="9.5" height="7" rx="1.5" fill="#8b8f94"/><text x="16.7" y="18.7" font-family="Liberation Sans,sans-serif" font-size="6" fill="#fff" text-anchor="middle">62</text></svg>
<svg style="left:390.2px;top:693.1px" width="20.2" height="20.2" viewBox="0 0 20 20"><rect width="20" height="20" fill="#b30f0f"/><rect x="1.2" y="1.2" width="17.6" height="17.6" fill="#c91414"/><text x="9.6" y="16" font-family="Liberation Sans,sans-serif" font-weight="bold" font-style="italic" font-size="15.5" fill="#fff" text-anchor="middle" letter-spacing="-1">Fz</text></svg>
<div class="abs" style="left:421px;top:687px;width:41px;height:30px;background:#434548"></div>
<svg style="left:431.4px;top:692px" width="23" height="23" viewBox="0 0 24 24"><circle cx="7" cy="7" r="5.5" fill="#1aa7ea"/><circle cx="13" cy="13" r="5.5" fill="#1aa7ea"/><circle cx="10" cy="10" r="7.6" fill="#1aa7ea"/><text x="10" y="14.8" font-family="Liberation Sans,sans-serif" font-weight="bold" font-size="13.5" fill="#fff" text-anchor="middle">S</text><circle cx="16.5" cy="16.6" r="5" fill="#ef3a34"/><text x="16.5" y="19.3" font-family="Liberation Sans,sans-serif" font-size="7.6" fill="#fff" text-anchor="middle">1</text></svg>
<svg style="left:473px;top:693.8px" width="20" height="20" viewBox="0 0 20 20"><path d="M1 1.500h9.500l3 3V18H1z" fill="#e9efe2"/><rect x="1.800" y="4.500" width="11.500" height="12.500" fill="#5cb52e"/><path d="M1.800 12.500 5.500 9l3.200 3 4.600-3.500V17H1.800z" fill="#2f7d1e"/><circle cx="5" cy="7.200" r="1.200" fill="#d6f07a"/><path d="M2 15.500h11" stroke="#8fd44f" stroke-width="1"/><path d="M17.300 1 18.800 2.200 12.500 12 11 12.800 11.200 11z" fill="#e8b923"/></svg>
<svg style="left:876.5px;top:692.8px" width="21" height="19" viewBox="0 0 22 20"><circle cx="10.500" cy="7.300" r="6" fill="#f7b733"/><path d="M5.500 18.500a4 4 0 0 1-.3-8 5.200 5.200 0 0 1 9.600-.7 4.400 4.400 0 0 1 1.200 8.700z" fill="#e4f0fb"/><path d="M5.500 18.500a4 4 0 0 1-1-7.800c1 3.500 4.500 5.800 11.500 7.800z" fill="#b4d4f2"/></svg>
<div class="tk" style="left:903.500px">22°C</div><div class="tk" style="left:935.500px">Неб. облачно...</div>
<svg style="left:1034px;top:697px" width="9" height="13" viewBox="0 0 9 13"><rect x="1.700" y="0" width="5.600" height="9.200" rx="2" fill="#f4f4f4"/><path d="M.6 7.800c0 2 1.700 2.900 3.900 2.900s3.900-.9 3.900-2.900" fill="none" stroke="#9a9a9a" stroke-width=".9"/><path d="M4.500 10.700v1.600M2.600 12.500h3.800" stroke="#d8d8d8" stroke-width=".9"/></svg>
<svg style="left:1051.5px;top:699.5px" width="14" height="8" viewBox="0 0 14 8"><rect x=".6" y=".6" width="12" height="6.8" fill="none" stroke="#f0f0f0" stroke-width="1.2"/><rect x="1.2" y="1.2" width="3.6" height="5.6" fill="#f0f0f0"/><rect x="12.8" y="2.5" width="1" height="3" fill="#f0f0f0"/></svg>
<div class="abs" style="left:1169.5px;top:703.6px;width:62px;height:62px;border-radius:50%;background:#e9e9ec;border:1.500px solid #9ccdf5;box-shadow:0 0 0 1.500px #0b3a63"></div>
<svg id="frame" width="1280" height="720" viewBox="0 0 1280 720"><path fill-rule="evenodd" fill="#de1221" d="M0 0h1280v720H0zM2.600 2.600V716.300H1276.900V2.600z"/></svg>
</body></html>
